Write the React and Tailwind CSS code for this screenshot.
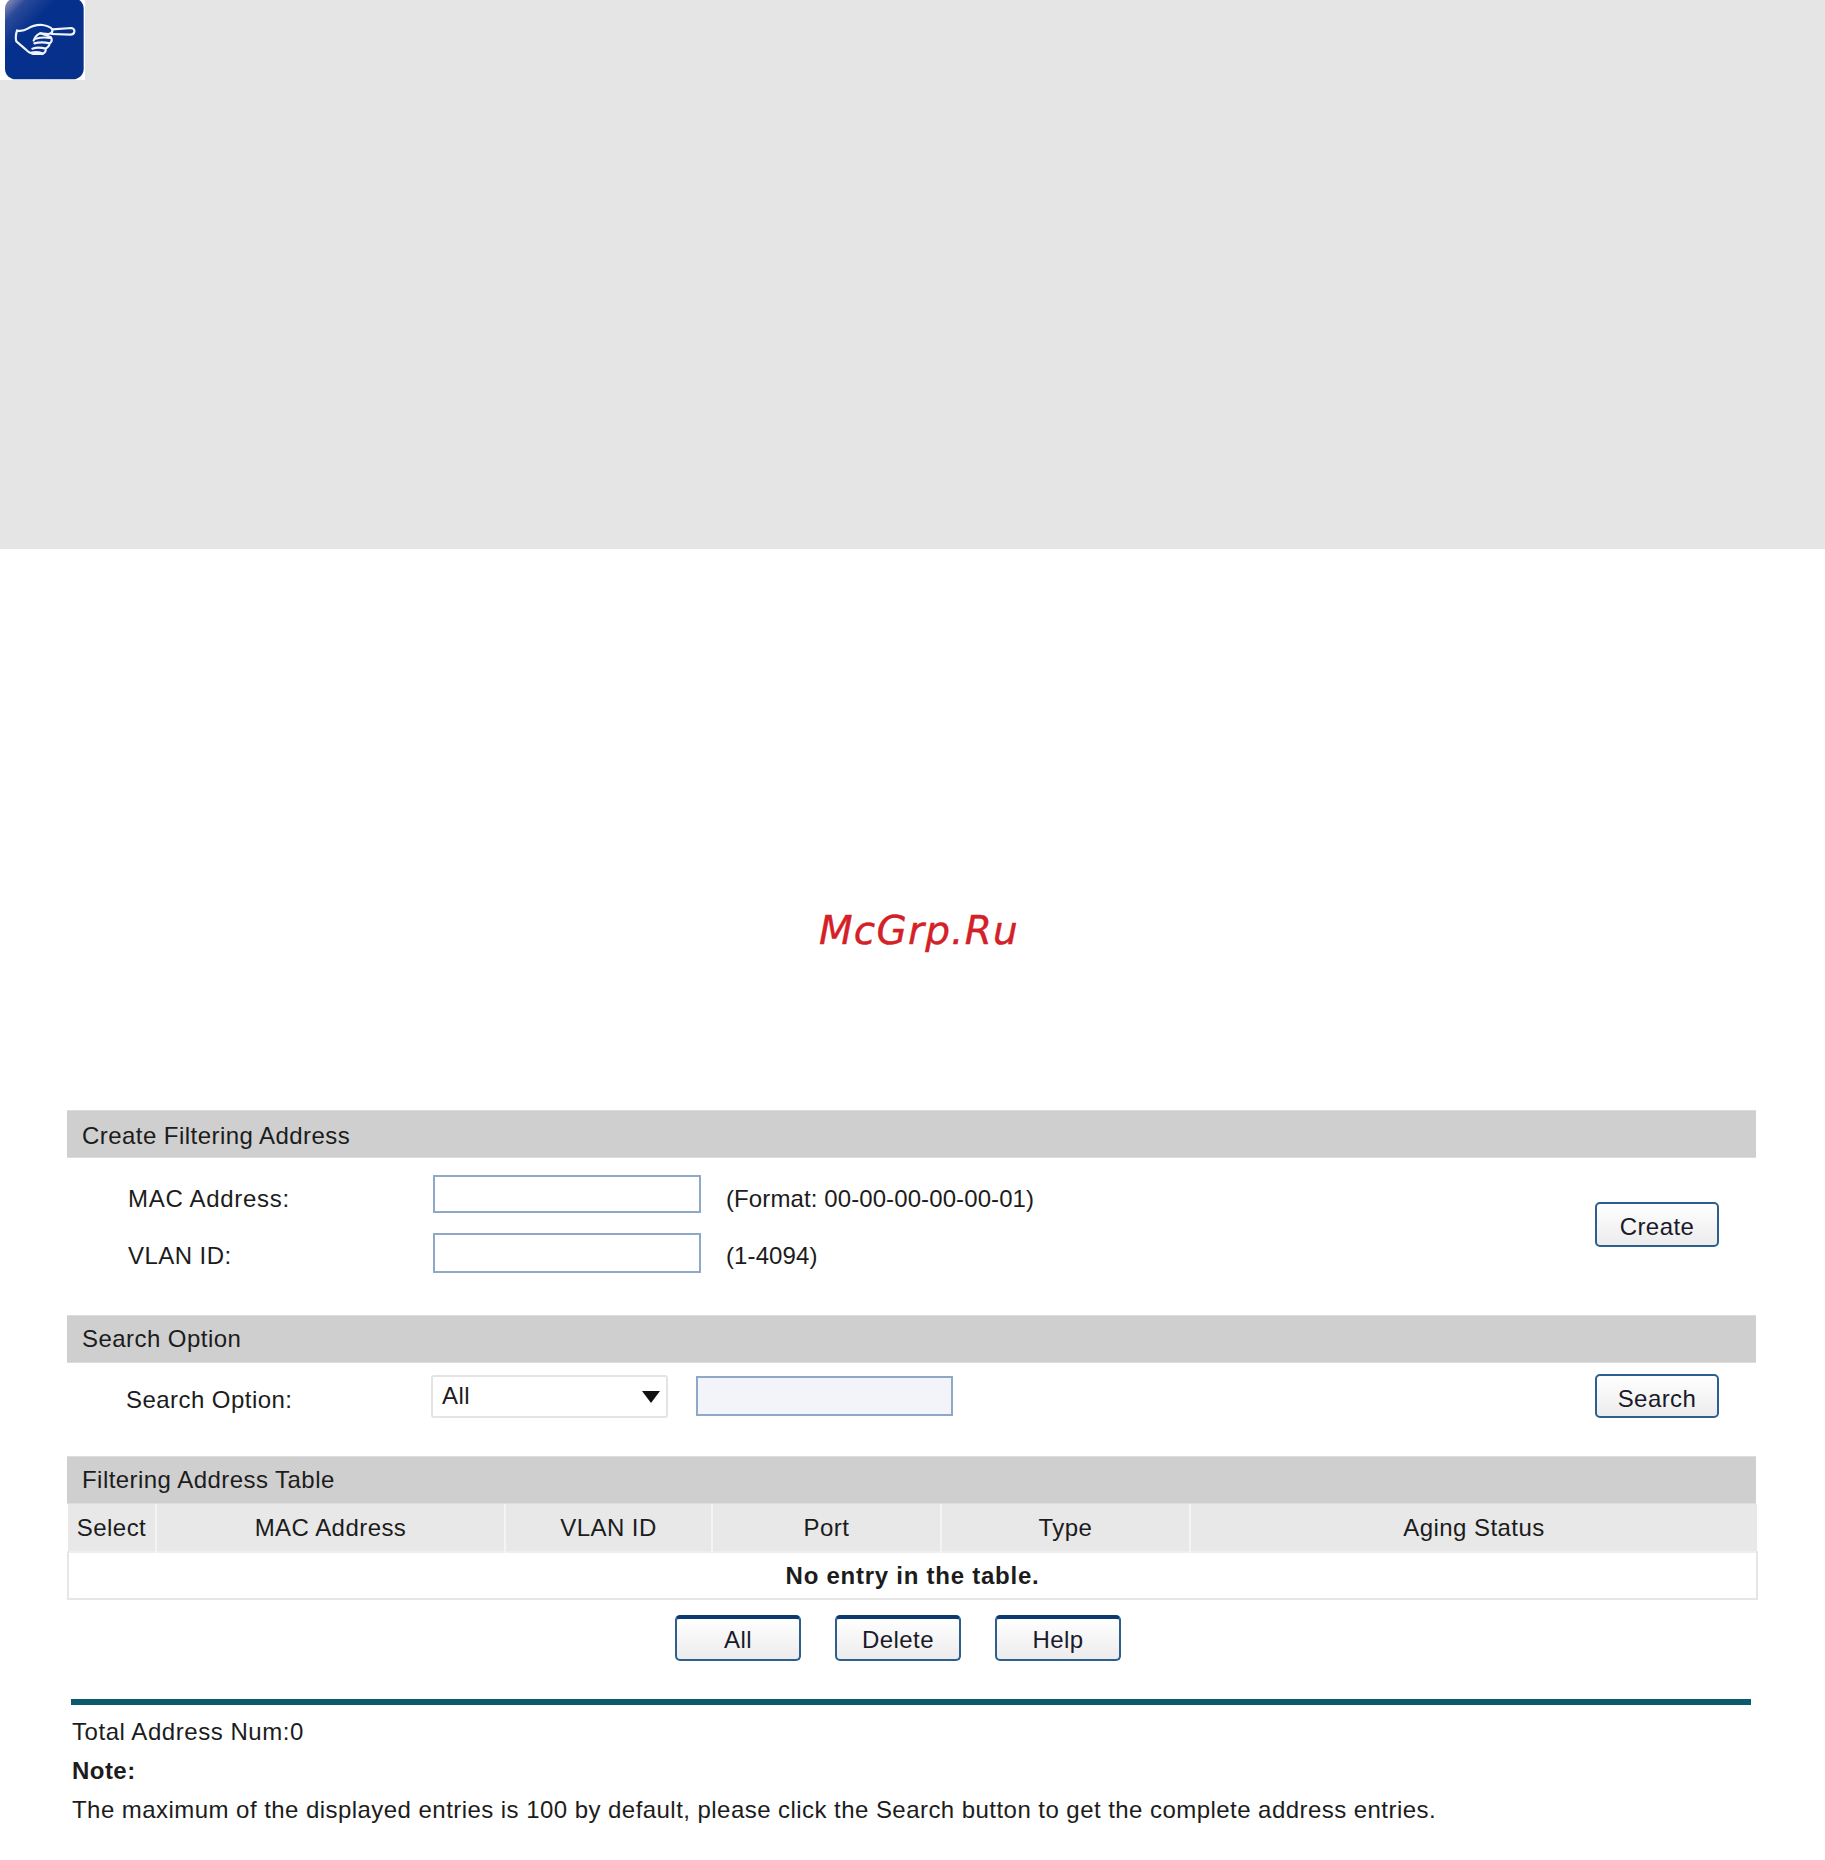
const font = "font-['Liberation_Sans',Arial,sans-serif]";

function HandIcon() {
  return (
    <svg width="80" height="80" viewBox="0 0 240 240" className="block">
      <defs>
        <linearGradient id="shine" x1="0" y1="0" x2="0.75" y2="0.75">
          <stop offset="0" stopColor="#a09cc0" />
          <stop offset="0.2" stopColor="#2a4a98" />
          <stop offset="0.45" stopColor="#05308c" />
          <stop offset="1" stopColor="#06308a" />
        </linearGradient>
      </defs>
      <rect x="0" y="-6" width="236" height="244" rx="32" fill="url(#shine)" />
      <g className="blur-[0.35px]" fill="none" stroke="#f0f3fa" strokeWidth="6.5" strokeLinejoin="round" strokeLinecap="round">
        <path d="M142 88 L200 84 Q209 86 208 95 Q206 104 196 104 L140 102" />
        <path d="M36 92 Q54 95 68 86 Q88 73 112 75 Q134 78 142 88 Q144 100 130 102 L106 100 Q92 105 86 122" />
        <path d="M36 92 Q30 110 34 124 L62 148 Q70 158 84 162 L112 162" />
        <path d="M106 100 Q124 106 138 112 Q144 124 134 130" />
        <path d="M92 116 Q112 110 136 114 M88 130 Q110 124 134 130 Q132 142 120 146 M82 146 Q100 140 122 146 Q124 156 112 162 M80 158 Q96 154 112 160" />
      </g>
    </svg>
  );
}

function SectionBar({ children, textClass = "" }) {
  return (
    <div className="h-[48px] bg-[#cfcfcf] border-t border-b border-[#dcdcdc] flex items-center pl-[15px] text-[24px]">
      <span className={textClass}>{children}</span>
    </div>
  );
}

function SmallButton({ children, className = "" }) {
  return (
    <button className={`w-[124px] rounded-[5px] border-2 border-[#2d5f8e] bg-gradient-to-b from-white to-[#ececec] text-[24px] text-[#1a1a2a] flex items-center justify-center ${className}`}>
      {children}
    </button>
  );
}

function TextBox({ className = "" }) {
  return <input type="text" className={`border-2 border-[#8fa8c8] outline-none ${className}`} />;
}

export default function App() {
  return (
    <div className={`w-[1825px] h-[1860px] bg-white text-[#1c1c1c] tracking-[0.45px] ${font}`}>
      <div className="h-[549px] bg-[#e5e5e5]">
        <div className="w-[85px] h-[80px] bg-white pl-[5px]">
          <HandIcon />
        </div>
      </div>

      <div className="h-[561px] pl-[819px] pt-[356px]">
        <span className="font-['DejaVu_Sans',sans-serif] italic text-[39px] leading-[52px] tracking-[1.2px] text-[#d42027] [-webkit-text-stroke:0.4px_#d42027]">McGrp.Ru</span>
      </div>

      <div className="ml-[67px] w-[1689px]">
        <SectionBar textClass="pt-[4px]">Create Filtering Address</SectionBar>
        <div className="h-[157px] flex text-[24px]">
          <div className="flex-1 pt-[17px] pl-[61px]">
            <div className="flex items-center h-[38px]">
              <span className="w-[305px] mt-[9px] tracking-[0.7px]">MAC Address:</span>
              <TextBox className="w-[268px] h-[38px]" />
              <span className="ml-[25px] mt-[9px] tracking-[0.1px]">(Format: 00-00-00-00-00-01)</span>
            </div>
            <div className="flex items-center h-[40px] mt-[20px]">
              <span className="w-[305px] mt-[5px]">VLAN ID:</span>
              <TextBox className="w-[268px] h-[40px]" />
              <span className="ml-[25px] mt-[5px] tracking-[0.1px]">(1-4094)</span>
            </div>
          </div>
          <SmallButton className="h-[45px] mt-[44px] mr-[37px] pt-[4px]">Create</SmallButton>
        </div>

        <SectionBar>Search Option</SectionBar>
        <div className="h-[93px] flex text-[24px] pt-[11px]">
          <div className="flex-1 flex items-center h-[44px] pl-[59px]">
            <span className="w-[305px] mt-[7px]">Search Option:</span>
            <div className="relative w-[237px] h-[43px]">
              <select className="w-full h-full appearance-none bg-white border-2 border-[#e4e4e4] rounded-[3px] pl-[9px] pb-[1px] text-[24px] outline-none">
                <option>All</option>
              </select>
              <svg width="18" height="12" viewBox="0 0 18 12" className="absolute right-[8px] top-[16px]">
                <path d="M0 0 H18 L9 12 Z" fill="#111" />
              </svg>
            </div>
            <TextBox className="ml-[28px] w-[257px] h-[40px] bg-[#f2f4f9]" />
          </div>
          <SmallButton className="h-[44px] mr-[37px] pt-[6px]">Search</SmallButton>
        </div>

        <SectionBar>Filtering Address Table</SectionBar>
        <table className="w-[1689px] table-fixed border-collapse text-[24px]">
          <colgroup>
            <col className="w-[88px]" />
            <col className="w-[349px]" />
            <col className="w-[207px]" />
            <col className="w-[229px]" />
            <col className="w-[249px]" />
            <col className="w-[567px]" />
          </colgroup>
          <thead>
            <tr className="h-[48px] bg-[#e8e8e8]">
              {["Select", "MAC Address", "VLAN ID", "Port", "Type", "Aging Status"].map((h, i) => (
                <th key={h} className={`font-normal p-0 text-center ${i < 5 ? "border-r-2 border-[#f4f4f4]" : ""}`}>{h}</th>
              ))}
            </tr>
          </thead>
          <tbody>
            <tr className="h-[47px]">
              <td colSpan={6} className="p-0 text-center font-bold tracking-[0.75px] border-2 border-[#e6e6e6] border-t-[#eeeeee]">No entry in the table.</td>
            </tr>
          </tbody>
        </table>

        <div className="flex gap-[34px] mt-[15px] pl-[608px]">
          <SmallButton className="w-[126px] h-[46px] border-t-[4px] border-t-[#0b3a70] pt-[2px]">All</SmallButton>
          <SmallButton className="w-[126px] h-[46px] border-t-[4px] border-t-[#0b3a70] pt-[2px]">Delete</SmallButton>
          <SmallButton className="w-[126px] h-[46px] border-t-[4px] border-t-[#0b3a70] pt-[2px]">Help</SmallButton>
        </div>

        <div className="mt-[38px] ml-[4px] w-[1680px] h-[6px] bg-[#0c5a6b]" />

        <div className="ml-[5px] text-[24px] leading-[39px] mt-[7px]">
          <div className="tracking-[0.55px]">Total Address Num:0</div>
          <div className="font-bold">Note:</div>
          <div>The maximum of the displayed entries is 100 by default, please click the Search button to get the complete address entries.</div>
        </div>
      </div>
    </div>
  );
}
